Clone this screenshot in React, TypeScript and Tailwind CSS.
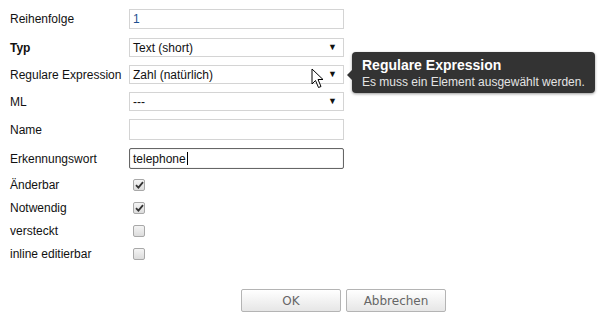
import React from "react";

const font = { fontFamily: '"Liberation Sans", Arial, sans-serif' };

function Label({ children, bold }: { children: React.ReactNode; bold?: boolean }) {
  return <div className={`w-[119px] shrink-0 text-[12px] text-[#111] ${bold ? "font-bold" : ""}`}>{children}</div>;
}

function TextInput({ value, focused, blue }: { value?: string; focused?: boolean; blue?: boolean }) {
  return (
    <div
      className={`flex h-full w-[215px] items-center px-[3px] text-[12px] ${
        focused ? "rounded-[2px] border border-[#666] shadow-[inset_0_0_1px_#999]" : "border border-[#d4d4d4]"
      } ${blue ? "text-[#1d4f91]" : "text-[#111]"}`}
    >
      {value}
      {focused && <span className="ml-[1px] h-[13px] w-[1px] bg-black" />}
    </div>
  );
}

function Select({ value }: { value: string }) {
  return (
    <div className="flex h-full w-[215px] items-center justify-between border border-[#d4d4d4] pl-[3px] pr-[6px] text-[12px] text-[#111]">
      <span>{value}</span>
      <span className="text-[9px] leading-none">▼</span>
    </div>
  );
}

function Checkbox({ checked }: { checked?: boolean }) {
  return (
    <div className="ml-[4px] flex h-[12px] w-[12px] items-center justify-center rounded-[2px] border border-[#a8a8a8] bg-gradient-to-b from-[#f4f4f4] to-[#dcdcdc]">
      {checked && (
        <svg width="9" height="8" viewBox="0 0 9 8">
          <path d="M1 4.2 L3.4 6.6 L8 1.2" fill="none" stroke="#333" strokeWidth="1.8" />
        </svg>
      )}
    </div>
  );
}

export default function App() {
  const rows: [string, boolean][] = [
    ["Änderbar", true],
    ["Notwendig", true],
    ["versteckt", false],
    ["inline editierbar", false],
  ];
  return (
    <div className="relative h-[322px] w-[605px] overflow-hidden bg-white pl-[10px]" style={font}>
      <div className="mt-[9px] flex h-[20px] items-center">
        <Label>Reihenfolge</Label>
        <TextInput value="1" blue />
      </div>
      <div className="mt-[9px] flex h-[19px] items-center">
        <Label bold>Typ</Label>
        <Select value="Text (short)" />
      </div>
      <div className="mt-[8px] flex h-[19px] items-center">
        <Label>Regulare Expression</Label>
        <Select value="Zahl (natürlich)" />
      </div>
      <div className="mt-[8px] flex h-[19px] items-center">
        <Label>ML</Label>
        <Select value="---" />
      </div>
      <div className="mt-[8px] flex h-[21px] items-center">
        <Label>Name</Label>
        <TextInput />
      </div>
      <div className="mt-[8px] flex h-[21px] items-center">
        <Label>Erkennungswort</Label>
        <TextInput value="telephone" focused />
      </div>
      <div className="mt-[4px]">
        {rows.map(([label, checked]) => (
          <div key={label} className="flex h-[23px] items-center">
            <Label>{label}</Label>
            <Checkbox checked={checked} />
          </div>
        ))}
      </div>
      <div className="ml-[231px] mt-[24px] flex gap-[5px]" style={{ fontFamily: '"DejaVu Sans", sans-serif' }}>
        {["OK", "Abbrechen"].map((b) => (
          <div
            key={b}
            className="flex h-[23px] w-[100px] items-center justify-center rounded-[2px] border border-[#b4b4b4] bg-gradient-to-b from-white to-[#e6e6e6] text-[12px] text-[#666]"
          >
            {b}
          </div>
        ))}
      </div>

      <div className="absolute left-[352px] top-[52px] h-[41px] w-[243px] rounded-[4px] bg-[#333] px-[10px] pt-[5px] shadow-[0_1px_3px_rgba(0,0,0,0.4)]">
        <div className="absolute left-[-5px] top-[18px] h-0 w-0 border-y-[5px] border-r-[5px] border-y-transparent border-r-[#333]" />
        <div className="text-[14px] font-bold leading-[16px] text-white">Regulare Expression</div>
        <div className="mt-[2px] text-[12px] leading-[14px] text-[#e4e4e4]">Es muss ein Element ausgewählt werden.</div>
      </div>

      <svg className="absolute left-[311px] top-[68px]" width="14" height="21" viewBox="0 0 14 21">
        <path d="M1 1 L1 16 L4.5 12.5 L7.5 19.5 L10 18.5 L7 11.5 L12 11.5 Z" fill="white" stroke="black" strokeWidth="1" strokeLinejoin="round" />
      </svg>
    </div>
  );
}
